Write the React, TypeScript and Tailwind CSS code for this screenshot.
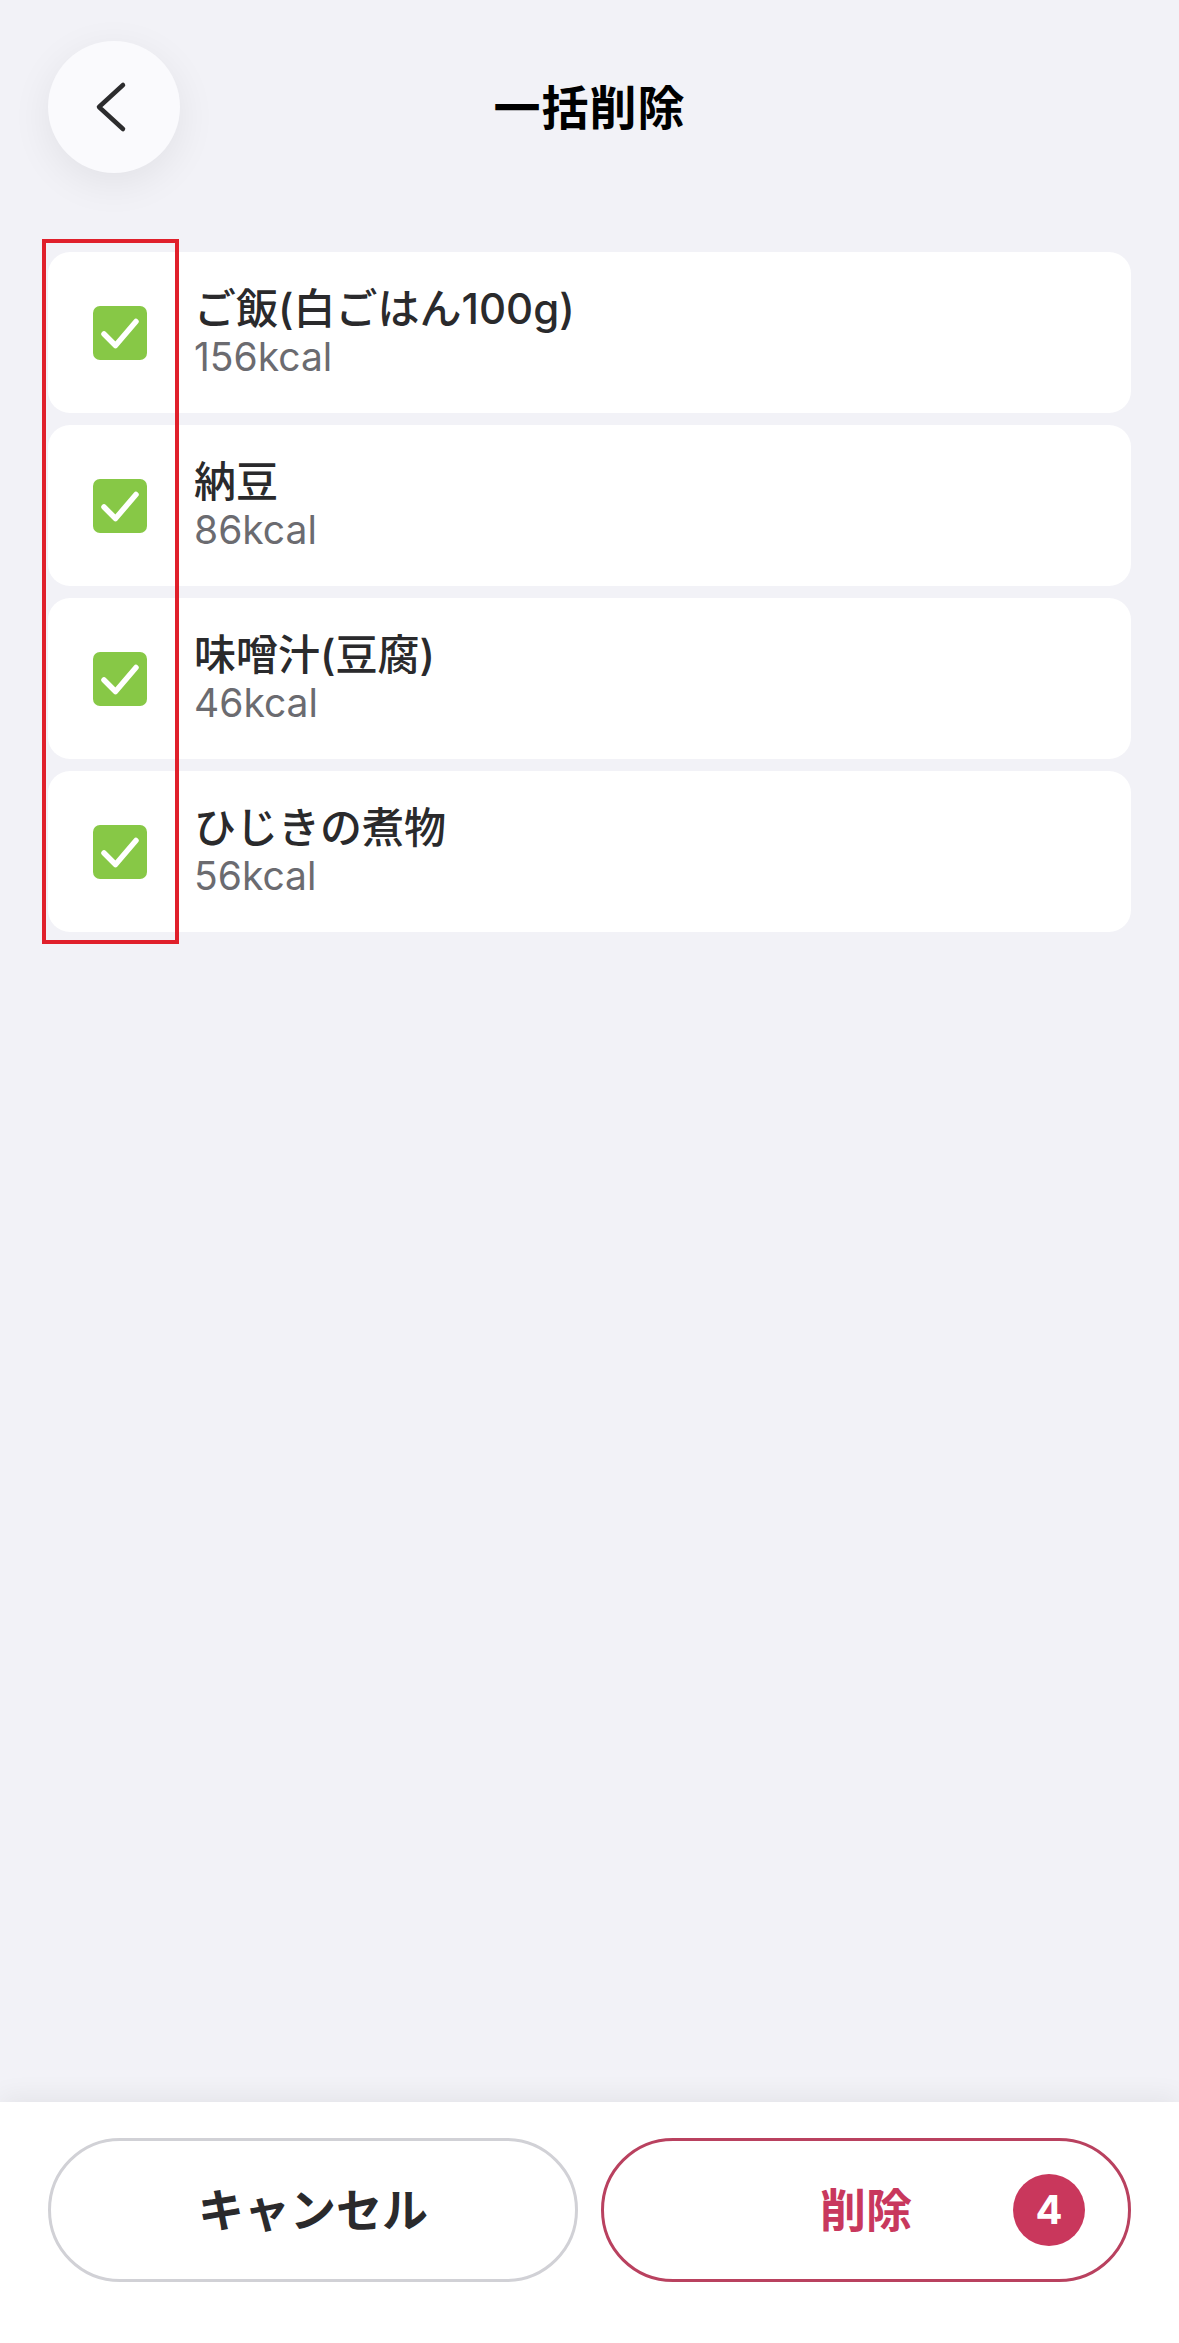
import React from "react";

const items = [
  { name: "ご飯(白ごはん100g)", kcal: "156kcal" },
  { name: "納豆", kcal: "86kcal" },
  { name: "味噌汁(豆腐)", kcal: "46kcal" },
  { name: "ひじきの煮物", kcal: "56kcal" },
];

function Check() {
  return (
    <div className="w-[54px] h-[54px] rounded-[7px] bg-[#87c846] flex items-center justify-center shrink-0">
      <svg width="54" height="54" viewBox="0 0 54 54" fill="none">
        <path d="M11 28 L22.5 39.5 L43 15.5" stroke="white" strokeWidth="5.5" strokeLinecap="round" strokeLinejoin="round" />
      </svg>
    </div>
  );
}

export default function App() {
  return (
    <div
      className="w-[1179px] h-[2343px] bg-[#f2f2f7] flex flex-col overflow-hidden"
      style={{ fontFamily: '"Inter", "Noto Sans CJK JP", sans-serif' }}
    >
      {/* Header */}
      <div className="grid grid-cols-[1fr_auto_1fr] items-center pt-[41px]">
        <div className="pl-[48px]">
          <button className="w-[132px] h-[132px] rounded-full bg-[#fafafd] shadow-[0_10px_40px_rgba(0,0,0,0.07)] flex items-center justify-center">
            <svg width="132" height="132" viewBox="0 0 132 132" fill="none">
              <path d="M75 85 L51 107 L75 129" transform="translate(0,-41)" stroke="#2c2c2e" strokeWidth="4.5" strokeLinecap="round" strokeLinejoin="round" />
            </svg>
          </button>
        </div>
        <h1 className="text-[47px] font-bold text-black leading-none tracking-[1px]">一括削除</h1>
        <div />
      </div>

      {/* List */}
      <div className="relative mt-[79px] px-[48px] flex flex-col gap-[12px]">
        {items.map((it) => (
          <div key={it.name} className="h-[161px] bg-white rounded-[22px] flex items-center pl-[45px]">
            <Check />
            <div className="ml-[47px] flex flex-col">
              <div className="text-[42px] leading-[48px] font-medium text-[#2a2a2c]">{it.name}</div>
              <div className="text-[39px] leading-[48px] text-[#6b6b70]">{it.kcal}</div>
            </div>
          </div>
        ))}
        <div className="absolute left-[42px] top-[-13px] w-[137px] h-[705px] border-[4px] border-[#e0202b] pointer-events-none" />
      </div>

      {/* Bottom bar */}
      <div className="mt-auto h-[241px] bg-white shadow-[0_-6px_24px_rgba(0,0,0,0.06)] px-[48px] pt-[36px] grid grid-cols-2 gap-[23px] items-start">
        <button className="h-[144px] rounded-full border-[3px] border-[#d1d1d6] bg-white flex items-center justify-center text-[46px] font-bold text-[#2a2a2c]">
          キャンセル
        </button>
        <button className="relative h-[144px] rounded-full border-[3px] border-[#b9415f] bg-white flex items-center justify-center text-[46px] font-bold text-[#c8385d]">
          削除
          <span className="absolute right-[43px] top-1/2 -translate-y-1/2 w-[72px] h-[72px] rounded-full bg-[#c9375c] text-white text-[40px] font-bold flex items-center justify-center">
            4
          </span>
        </button>
      </div>
    </div>
  );
}
